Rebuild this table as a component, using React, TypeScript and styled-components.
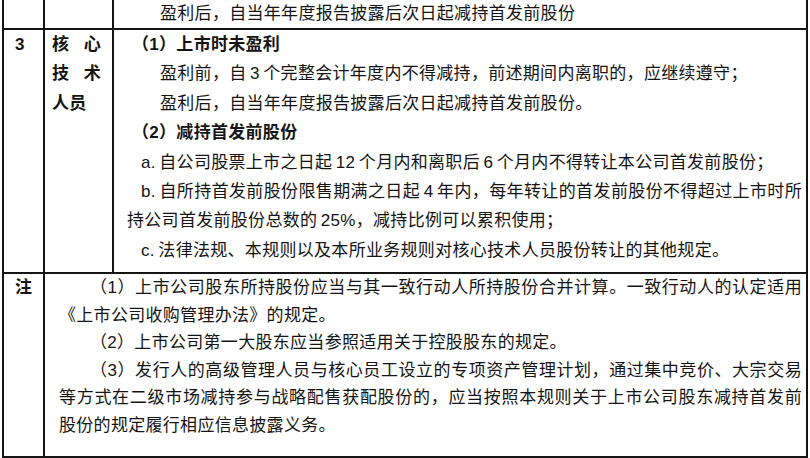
import React from 'react';
import styled, { createGlobalStyle } from 'styled-components';

const GlobalStyle = createGlobalStyle`
  html, body {
    margin: 0;
    padding: 0;
    background: #fff;
  }
  body {
    font-family: "Liberation Sans", "Noto Sans CJK SC", sans-serif;
    color: #141414;
  }
`;

const Sheet = styled.div`
  box-sizing: border-box;
  width: 806px;
  margin-left: 2px;
  border-left: 2px solid #141414;
  border-right: 2px solid #141414;
  border-bottom: 2px solid #141414;
  font-size: 17px;
  letter-spacing: 0.3px;
  word-spacing: -1.5px;
`;

const Row = styled.div<{ $cols: string; $top?: boolean }>`
  display: grid;
  grid-template-columns: ${(p) => p.$cols};
  border-top: ${(p) => (p.$top ? '2px solid #141414' : 'none')};
`;

const Cell = styled.div<{ $divider?: boolean }>`
  box-sizing: border-box;
  border-right: ${(p) => (p.$divider ? '2px solid #141414' : 'none')};
`;

const HeadCell = styled(Cell)`
  font-weight: 700;
  padding-left: 11px;
  line-height: 29.4px;
`;

const NoteHead = styled(HeadCell)`
  line-height: 27.5px;
`;

const LabelCell = styled(Cell)`
  padding-left: 7px;
  font-weight: 700;
  line-height: 29.4px;
`;

const LabelLine = styled.div<{ $spread?: boolean }>`
  width: 49px;
  display: flex;
  justify-content: ${(p) => (p.$spread ? 'space-between' : 'flex-start')};
`;

const Body = styled(Cell)<{ $lh: number; $pad: string }>`
  padding: ${(p) => p.$pad};
  line-height: ${(p) => p.$lh}px;
`;

const Line = styled.div<{ $indent?: number; $fill?: boolean; $bold?: boolean }>`
  padding-left: ${(p) => p.$indent ?? 0}px;
  font-weight: ${(p) => (p.$bold ? 700 : 400)};
  white-space: ${(p) => (p.$fill ? 'normal' : 'nowrap')};
  text-align: ${(p) => (p.$fill ? 'justify' : 'left')};
  text-align-last: ${(p) => (p.$fill ? 'justify' : 'auto')};
`;

const TopCell = styled(Cell)`
  height: 28px;
`;

export default function App() {
  return (
    <>
      <GlobalStyle />
      <Sheet>
        <Row $cols="41px 69px 1fr">
          <TopCell $divider />
          <TopCell $divider />
          <Body $lh={28} $pad="0 4px 0 13px">
            <Line $indent={33}>盈利后，自当年年度报告披露后次日起减持首发前股份</Line>
          </Body>
        </Row>

        <Row $cols="41px 69px 1fr" $top>
          <HeadCell $divider>3</HeadCell>
          <LabelCell $divider>
            <LabelLine $spread><span>核</span><span>心</span></LabelLine>
            <LabelLine $spread><span>技</span><span>术</span></LabelLine>
            <LabelLine>人员</LabelLine>
          </LabelCell>
          <Body $lh={29.4} $pad="0 4px 7px 13px">
            <Line $bold $indent={5}>（1）上市时未盈利</Line>
            <Line $indent={33}>盈利前，自 3 个完整会计年度内不得减持，前述期间内离职的，应继续遵守；</Line>
            <Line $indent={33}>盈利后，自当年年度报告披露后次日起减持首发前股份。</Line>
            <Line $bold $indent={5}>（2）减持首发前股份</Line>
            <Line $indent={14}>a. 自公司股票上市之日起 12 个月内和离职后 6 个月内不得转让本公司首发前股份；</Line>
            <Line $indent={14} $fill>b. 自所持首发前股份限售期满之日起 4 年内，每年转让的首发前股份不得超过上市时所</Line>
            <Line>持公司首发前股份总数的 25%，减持比例可以累积使用；</Line>
            <Line $indent={14}>c. 法律法规、本规则以及本所业务规则对核心技术人员股份转让的其他规定。</Line>
          </Body>
        </Row>

        <Row $cols="41px 1fr" $top>
          <NoteHead $divider>注</NoteHead>
          <Body $lh={27.5} $pad="0 4px 17px 14px">
            <Line $indent={31} $fill>（1）上市公司股东所持股份应当与其一致行动人所持股份合并计算。一致行动人的认定适用</Line>
            <Line>《上市公司收购管理办法》的规定。</Line>
            <Line $indent={31}>（2）上市公司第一大股东应当参照适用关于控股股东的规定。</Line>
            <Line $indent={31} $fill>（3）发行人的高级管理人员与核心员工设立的专项资产管理计划，通过集中竞价、大宗交易</Line>
            <Line $fill>等方式在二级市场减持参与战略配售获配股份的，应当按照本规则关于上市公司股东减持首发前</Line>
            <Line>股份的规定履行相应信息披露义务。</Line>
          </Body>
        </Row>
      </Sheet>
    </>
  );
}
